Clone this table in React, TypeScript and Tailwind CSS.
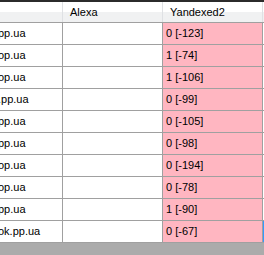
const rows = [
  { site: 'pp.ua', alexa: '', yandex: '0 [-123]' },
  { site: 'op.ua', alexa: '', yandex: '1 [-74]' },
  { site: 'op.ua', alexa: '', yandex: '1 [-106]' },
  { site: '.pp.ua', alexa: '', yandex: '0 [-99]' },
  { site: 'pp.ua', alexa: '', yandex: '0 [-105]' },
  { site: 'pp.ua', alexa: '', yandex: '0 [-98]' },
  { site: 'op.ua', alexa: '', yandex: '0 [-194]' },
  { site: 'op.ua', alexa: '', yandex: '0 [-78]' },
  { site: 'pp.ua', alexa: '', yandex: '1 [-90]' },
  { site: 'ok.pp.ua', alexa: '', yandex: '0 [-67]' },
]

export default function App() {
  return (
    <div
      className="w-[264px] h-[255px] overflow-hidden bg-[#ababab] text-[11px] text-black"
      style={{ fontFamily: '"Liberation Sans", Arial, sans-serif' }}
    >
      {/* header */}
      <div className="flex h-[23px] border-t-2 border-b border-t-[#2b2b2b] border-b-[#a0a0a0] bg-gradient-to-b from-white from-50% to-[#f0f1f2] to-50%">
        <div className="w-[63px] shrink-0 border-r border-[#dfe1e4]" />
        <div className="w-[100px] shrink-0 border-r border-[#dfe1e4] pl-[7px] flex items-center">Alexa</div>
        <div className="w-[100px] shrink-0 border-r border-[#dfe1e4] pl-[7px] flex items-center">Yandexed2</div>
        <div className="flex-1" />
      </div>

      {rows.map((r, i) => (
        <div key={i} className="flex h-[22px] bg-white border-b border-[#a0a0a0]">
          <div className="w-[63px] shrink-0 border-r border-[#a0a0a0] overflow-hidden flex items-center">
            <span className="ml-[-2px] whitespace-nowrap">{r.site}</span>
          </div>
          <div className="w-[100px] shrink-0 border-r border-[#a0a0a0] pl-[3px] flex items-center">{r.alexa}</div>
          <div className="w-[100px] shrink-0 border-r border-[#a0a0a0] bg-[#ffb6c1] pl-[3px] flex items-center">{r.yandex}</div>
          <div className={i === rows.length - 1 ? 'flex-1 bg-[#3399ff]' : 'flex-1'} />
        </div>
      ))}
    </div>
  )
}
